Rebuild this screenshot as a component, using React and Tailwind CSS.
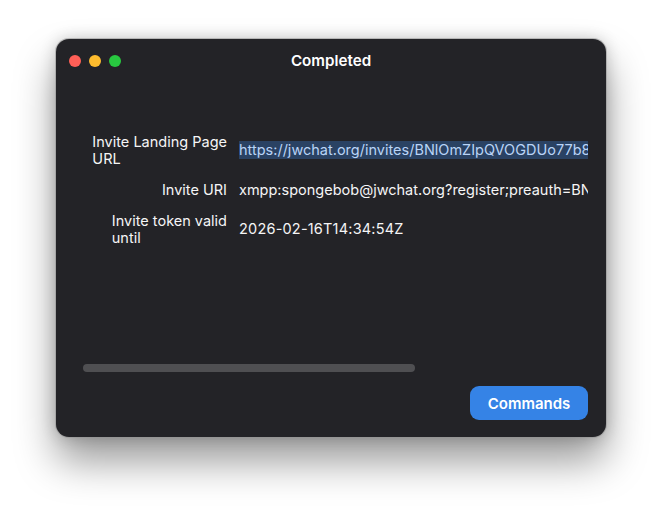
import React from "react";

const rows = [
  {
    label: ["Invite Landing Page", "URL"],
    value: "https://jwchat.org/invites/BNlOmZIpQVOGDUo77b8xKq2T",
    selected: true,
  },
  {
    label: ["Invite URI"],
    value: "xmpp:spongebob@jwchat.org?register;preauth=BNlOmZIpQVOGDUo77b8x",
  },
  {
    label: ["Invite token valid", "until"],
    value: "2026-02-16T14:34:54Z",
    numeric: true,
  },
];

export default function App() {
  return (
    <div className="w-[662px] h-[512px] bg-white pt-[39px] pl-[56px] font-['Inter','Liberation_Sans',sans-serif] overflow-hidden">
      <div className="w-[550px] h-[398px] bg-[#232327] rounded-[13px] flex flex-col shadow-[0_0_0_1px_rgba(150,150,150,0.55),0_24px_40px_rgba(0,0,0,0.4),0_0_16px_rgba(0,0,0,0.2)]">
        <div className="relative h-[44px] flex items-center justify-center shrink-0">
          <div className="absolute left-[13px] top-[16px] flex gap-2">
            <span className="w-3 h-3 rounded-full bg-[#ff5f57]" />
            <span className="w-3 h-3 rounded-full bg-[#febc2e]" />
            <span className="w-3 h-3 rounded-full bg-[#28c840]" />
          </div>
          <h1 className="text-[15.2px] font-semibold text-white">Completed</h1>
        </div>

        <div className="mt-[50px] ml-[37px] mr-[18px] flex flex-col gap-[13.5px] text-[14.5px] text-[#f5f5f6]">
          {rows.map((row) => (
            <div key={row.value} className="flex items-center gap-3">
              <div className="w-[134px] shrink-0 flex justify-end leading-[17px]">
                <div className="w-fit whitespace-nowrap">
                  {row.label.map((line) => (
                    <div key={line}>{line}</div>
                  ))}
                </div>
              </div>
              <div className="w-[349px] overflow-hidden whitespace-nowrap leading-[18px]">
                <span
                  className={
                    row.selected
                      ? "bg-[#2a4263] text-[#b9d4f7] block"
                      : row.numeric
                        ? "block tracking-[0.2px]"
                        : "block"
                  }
                >
                  {row.value}
                </span>
              </div>
            </div>
          ))}
        </div>

        <div className="flex-1 flex flex-col justify-end px-[18px] pb-[17px]">
          <div className="ml-[9px] w-[332px] h-2 rounded-full bg-[#4f4f52] mb-[14px]" />
          <div className="flex justify-end">
            <button className="w-[118px] h-[34px] rounded-[9px] bg-[#3583e6] text-white text-[15px] leading-[36px] font-semibold">
              Commands
            </button>
          </div>
        </div>
      </div>
    </div>
  );
}
